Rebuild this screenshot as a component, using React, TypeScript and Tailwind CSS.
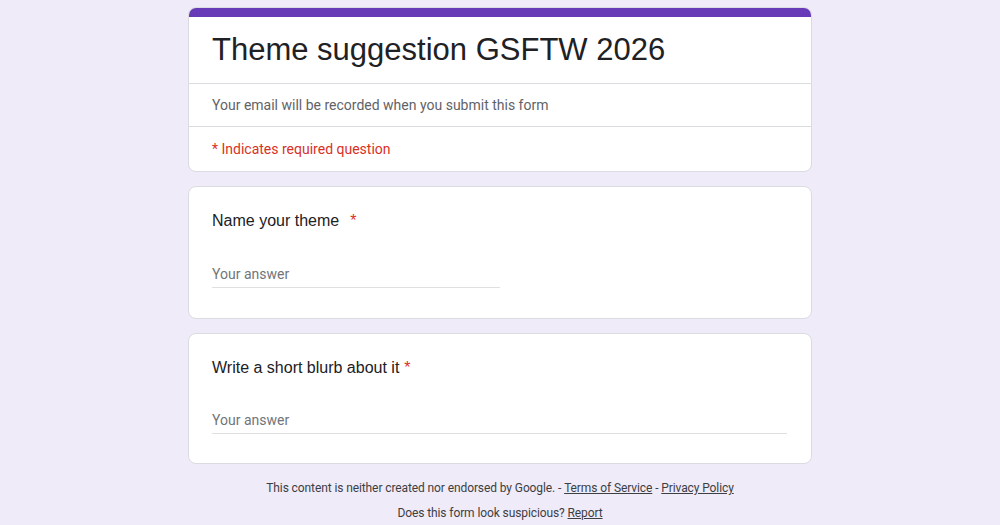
import React from "react";

const roboto = { fontFamily: "Roboto, 'Liberation Sans', Arial, sans-serif" };
const arial = { fontFamily: "'Liberation Sans', Arial, sans-serif" };

interface QuestionProps {
  title: string;
  gap: string;
  pad: string;
  space: string;
  short?: boolean;
}

const Question: React.FC<QuestionProps> = ({ title, gap, pad, space, short }) => {
  return (
    <div className={"bg-white border border-[#dadce0] rounded-lg pl-[23px] pr-6 " + pad}>
      <div className="flex items-center text-[16px] leading-6 text-[#202124]" style={arial}>
        <span>{title}</span>
        <span className={gap + " text-[#d93025]"}>*</span>
      </div>
      <div
        className={
          space +
          " h-[32px] flex items-end pb-[2px] border-b border-[#e0e0e0] text-[14px] text-[#70757a] " +
          (short ? "w-1/2" : "w-full")
        }
        style={roboto}
      >
        Your answer
      </div>
    </div>
  );
};

export default function App() {
  return (
    <div className="min-h-[525px] bg-[#f0ebf8] pt-[7px]">
      <div className="w-[624px] mx-auto flex flex-col gap-[14px]">
        {/* header */}
        <div className="bg-white border border-[#dadce0] rounded-lg overflow-hidden">
          <div className="h-[10px] bg-[#673ab7] -mx-px -mt-px"></div>
          <div className="h-[66px] flex items-center pl-[23px] pr-6 text-[31px] text-[#202124]" style={arial}>
            Theme suggestion GSFTW 2026
          </div>
          <div
            className="h-[43px] flex items-center pl-[23px] pr-6 border-t border-[#dadce0] text-[14px] text-[#5f6368]"
            style={roboto}
          >
            Your email will be recorded when you submit this form
          </div>
          <div
            className="h-[45px] flex items-center pl-[23px] pr-6 border-t border-[#dadce0] text-[14px] text-[#d93025]"
            style={roboto}
          >
            * Indicates required question
          </div>
        </div>

        <Question
          title="Name your theme"
          gap="ml-[11px]"
          pad="pt-[22px] pb-[30px]"
          space="mt-[23px]"
          short
        />
        <Question
          title="Write a short blurb about it"
          gap="ml-[5px]"
          pad="pt-[22px] pb-[29px]"
          space="mt-[22px]"
        />

        {/* footer */}
        <div
          className="flex flex-col items-center text-[12px] tracking-[-0.1px] text-[#3c4043] -mt-[2px]"
          style={roboto}
        >
          <div className="h-[24px] flex items-center">
            This content is neither created nor endorsed by Google.&nbsp;-&nbsp;
            <span className="underline">Terms of Service</span>&nbsp;-&nbsp;
            <span className="underline">Privacy Policy</span>
          </div>
          <div className="h-[24px] flex items-center mt-px">
            Does this form look suspicious?&nbsp;<span className="underline">Report</span>
          </div>
        </div>
      </div>
    </div>
  );
}
